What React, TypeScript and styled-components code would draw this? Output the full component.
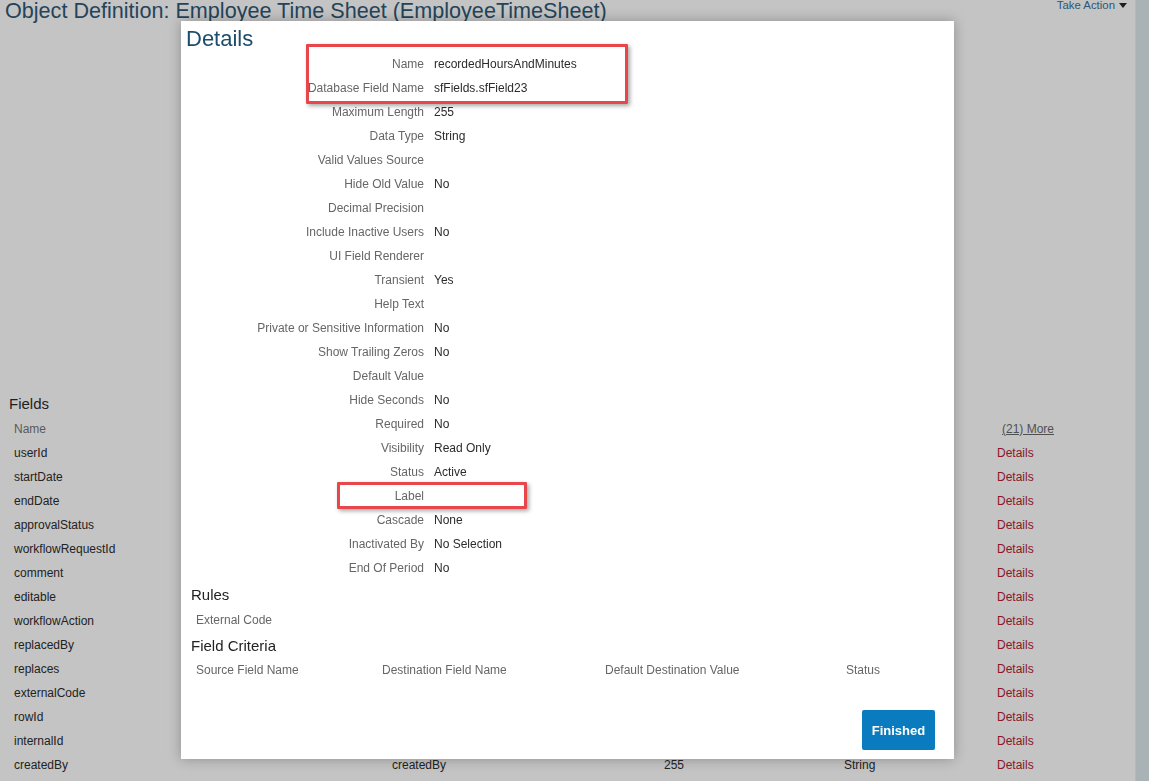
import styled, { createGlobalStyle } from "styled-components";

const GlobalStyle = createGlobalStyle`
	html, body {
		margin: 0;
		padding: 0;
		background: #c4c4c4;
		font-family: "Liberation Sans", Arial, sans-serif;
		overflow: hidden;
	}
	* {
		box-sizing: border-box;
	}
`;

const detailRows: [string, string][] = [
	["Name", "recordedHoursAndMinutes"],
	["Database Field Name", "sfFields.sfField23"],
	["Maximum Length", "255"],
	["Data Type", "String"],
	["Valid Values Source", ""],
	["Hide Old Value", "No"],
	["Decimal Precision", ""],
	["Include Inactive Users", "No"],
	["UI Field Renderer", ""],
	["Transient", "Yes"],
	["Help Text", ""],
	["Private or Sensitive Information", "No"],
	["Show Trailing Zeros", "No"],
	["Default Value", ""],
	["Hide Seconds", "No"],
	["Required", "No"],
	["Visibility", "Read Only"],
	["Status", "Active"],
	["Label", ""],
	["Cascade", "None"],
	["Inactivated By", "No Selection"],
	["End Of Period", "No"],
];

const fieldRows: [string, string, string, string][] = [
	["userId", "userId", "100", "String"],
	["startDate", "startDate", "", "Date"],
	["endDate", "endDate", "", "Date"],
	["approvalStatus", "approvalStatus", "255", "Enum"],
	["workflowRequestId", "workflowRequestId", "", "Long"],
	["comment", "comment", "4000", "String"],
	["editable", "editable", "", "Boolean"],
	["workflowAction", "workflowAction", "255", "String"],
	["replacedBy", "replacedBy", "", "Long"],
	["replaces", "replaces", "", "Long"],
	["externalCode", "externalCode", "128", "String"],
	["rowId", "rowId", "", "Long"],
	["internalId", "internalId", "", "Long"],
	["createdBy", "createdBy", "255", "String"],
];

export default function App() {
	return (
		<Page>
			<GlobalStyle />
			<Main>
				<TopBar>
					<PageTitle>Object Definition: Employee Time Sheet (EmployeeTimeSheet)</PageTitle>
					<TakeAction>
						Take Action
						<svg width="8" height="5" viewBox="0 0 8 5">
							<path d="M0 0h8L4 5z" fill="#1e1e1e" />
						</svg>
					</TakeAction>
				</TopBar>

				<FieldsSection>
					<SectionTitle>Fields</SectionTitle>
					<FieldsTable>
						<FieldsHead>
							<HeadCell>Name</HeadCell>
							<HeadCell />
							<HeadCell />
							<HeadCell />
							<MoreCell>(21) More</MoreCell>
						</FieldsHead>
						{fieldRows.map((r) => (
							<FieldRow key={r[0]}>
								<Cell>{r[0]}</Cell>
								<Cell>{r[1]}</Cell>
								<Cell>{r[2]}</Cell>
								<Cell>{r[3]}</Cell>
								<DetailsLink>Details</DetailsLink>
							</FieldRow>
						))}
					</FieldsTable>
				</FieldsSection>
			</Main>
			<SideStrip />

			<Dialog>
				<DialogTitle>Details</DialogTitle>
				<DetailGrid>
					{detailRows.map(([label, value]) => (
						<DetailRow key={label}>
							<DetailLabel>{label}</DetailLabel>
							<DetailValue>{value}</DetailValue>
						</DetailRow>
					))}
				</DetailGrid>

				<SubTitle>Rules</SubTitle>
				<PlainRow>External Code</PlainRow>

				<SubTitle>Field Criteria</SubTitle>
				<CriteriaHead>
					<span>Source Field Name</span>
					<span>Destination Field Name</span>
					<span>Default Destination Value</span>
					<span>Status</span>
				</CriteriaHead>

				<Footer>
					<PrimaryButton>Finished</PrimaryButton>
				</Footer>

				<Highlight $left={125} $top={23} $width={322} $height={60} />
				<Highlight $left={156} $top={461} $width={190} $height={27} />
			</Dialog>
		</Page>
	);
}

const Page = styled.div`
	display: flex;
	width: 1149px;
	height: 781px;
	background: #c4c4c4;
	overflow: hidden;
`;

const Main = styled.div`
	flex: 1;
	display: flex;
	flex-direction: column;
`;

const SideStrip = styled.div`
	width: 14px;
	background: #a9b3b5;
	border-left: 1px solid #b6b9ba;
`;

const TopBar = styled.div`
	display: flex;
	justify-content: space-between;
	align-items: flex-start;
	padding: 0 8px 0 5px;
	height: 22px;
`;

const PageTitle = styled.h1`
	margin: 0;
	font-size: 21.6px;
	font-weight: 400;
	line-height: 22px;
	color: #24445a;
	white-space: nowrap;
`;

const TakeAction = styled.div`
	display: flex;
	align-items: center;
	gap: 4px;
	margin-top: -1px;
	font-size: 11.4px;
	line-height: 13px;
	color: #2d5673;
`;

const FieldsSection = styled.div`
	margin-top: 370px;
	padding: 0 0 0 9px;
`;

const SectionTitle = styled.h2`
	margin: 0;
	font-size: 15px;
	font-weight: 400;
	line-height: 24px;
	color: #1e1e1e;
`;

const FieldsTable = styled.div`
	display: flex;
	flex-direction: column;
	padding-left: 5px;
`;

const FieldsHead = styled.div`
	display: grid;
	grid-template-columns: 378px 272px 180px 153px 1fr;
	height: 25px;
	align-items: center;
`;

const FieldRow = styled(FieldsHead)`
	height: 24px;
`;

const HeadCell = styled.span`
	font-size: 12px;
	color: #5a5a5a;
`;

const MoreCell = styled.span`
	font-size: 12px;
	color: #505050;
	text-decoration: underline;
	padding-left: 5px;
`;

const Cell = styled.span`
	font-size: 12px;
	color: #222;
	white-space: nowrap;
`;

const DetailsLink = styled.span`
	font-size: 12px;
	color: #8a1626;
`;

const Dialog = styled.div`
	position: fixed;
	left: 181px;
	top: 21px;
	width: 773px;
	height: 738px;
	background: #fff;
	box-shadow: 0 0 12px rgba(0, 0, 0, 0.28);
	display: flex;
	flex-direction: column;
	padding-top: 4px;
`;

const DialogTitle = styled.h1`
	margin: 0;
	padding-left: 5px;
	height: 27px;
	font-size: 22px;
	font-weight: 400;
	line-height: 27px;
	color: #1d4d6c;
`;

const DetailGrid = styled.div`
	display: flex;
	flex-direction: column;
`;

const DetailRow = styled.div`
	display: grid;
	grid-template-columns: 243px 1fr;
	column-gap: 10px;
	height: 24px;
	align-items: center;
	font-size: 12px;
`;

const DetailLabel = styled.span`
	text-align: right;
	color: #666;
	white-space: nowrap;
`;

const DetailValue = styled.span`
	color: #2b2b2b;
`;

const SubTitle = styled.h3`
	margin: 0;
	padding-left: 10px;
	height: 25px;
	font-size: 15px;
	font-weight: 400;
	line-height: 25px;
	color: #222;
	&:first-of-type {
		margin-top: 2px;
	}
`;

const PlainRow = styled.div`
	height: 24px;
	line-height: 24px;
	margin: 1px 0 1px;
	padding-left: 15px;
	font-size: 12px;
	color: #666;
`;

const CriteriaHead = styled.div`
	display: grid;
	grid-template-columns: 186px 223px 241px 1fr;
	height: 24px;
	align-items: center;
	padding-left: 15px;
	font-size: 12px;
	color: #666;
`;

const Footer = styled.div`
	margin-top: auto;
	display: flex;
	justify-content: flex-end;
	padding: 0 19px 9px 0;
`;

const PrimaryButton = styled.button`
	width: 73px;
	height: 40px;
	border: none;
	border-radius: 2px;
	background: #0a7bbf;
	color: #fff;
	font-family: "Liberation Sans", Arial, sans-serif;
	font-size: 13px;
	font-weight: 700;
	padding: 0;
`;

const Highlight = styled.div<{
	$left: number;
	$top: number;
	$width: number;
	$height: number;
}>`
	position: absolute;
	left: ${({ $left }) => $left}px;
	top: ${({ $top }) => $top}px;
	width: ${({ $width }) => $width}px;
	height: ${({ $height }) => $height}px;
	border: 3px solid #e9464c;
	border-radius: 1px;
	box-shadow: 2px 2px 4px rgba(0, 0, 0, 0.35);
	pointer-events: none;
`;
